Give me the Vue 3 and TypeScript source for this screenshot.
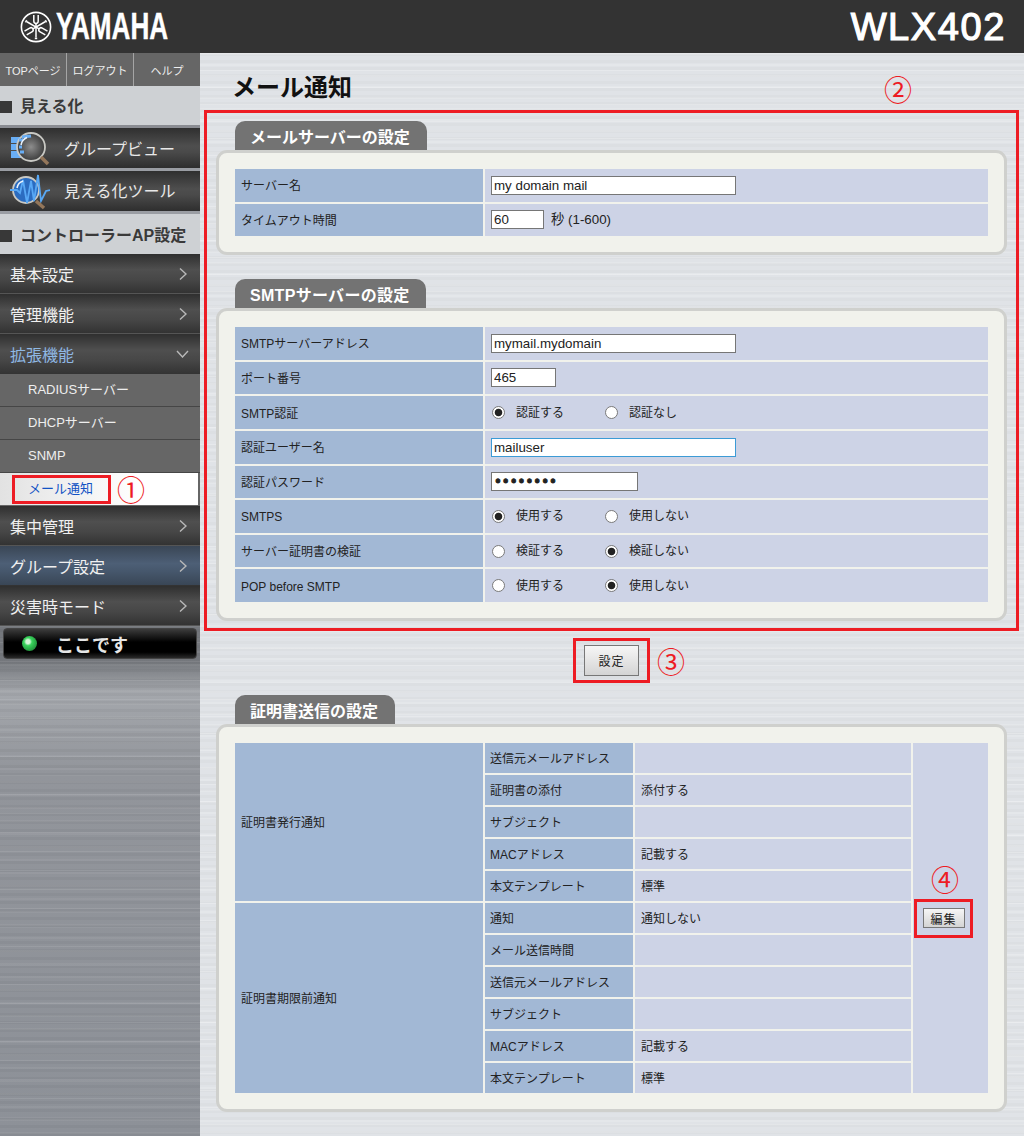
<template>
  <div class="page">
    <header class="topbar">
      <div class="brand">
        <svg class="emblem" width="32" height="32" viewBox="-16 -16 32 32">
          <circle r="14.6" fill="none" stroke="#fff" stroke-width="1.6" />
          <g v-for="a in [0, 120, 240]" :key="a" :transform="`rotate(${a})`" stroke="#fff" fill="none">
            <path d="M-2.2 -12 V-6 Q-2.2 -3.6 0 -3.6 Q2.2 -3.6 2.2 -6 V-12" stroke-width="1.5" />
            <path d="M0 -3.6 V10.5" stroke-width="1.5" />
            <path d="M-1.2 11.4 H1.2" stroke-width="1.6" />
          </g>
        </svg>
        <span class="brand-name">YAMAHA</span>
      </div>
      <span class="model">WLX402</span>
    </header>

    <div class="body">
      <aside class="sidebar">
        <nav class="topnav">
          <a>TOPページ</a>
          <a>ログアウト</a>
          <a>ヘルプ</a>
        </nav>

        <h2 class="side-head">見える化</h2>
        <a class="tool">
          <svg width="50" height="40" viewBox="0 0 50 40">
            <defs>
              <radialGradient id="lens">
                <stop offset="0" stop-color="#8d8d8d" />
                <stop offset="1" stop-color="#3c3c3c" />
              </radialGradient>
            </defs>
            <g fill="#69aef5">
              <rect x="11" y="9" width="12" height="6" />
              <rect x="11" y="16" width="12" height="6" />
              <rect x="11" y="23" width="12" height="7" />
            </g>
            <circle cx="31" cy="19" r="14" fill="url(#lens)" stroke="#c9c9c4" stroke-width="1.8" />
            <path d="M19 12 H23 M19 19 H22 M20 24 H24 M22 9 L31 8" stroke="#69aef5" stroke-width="3" />
            <path d="M21 17 A10 10 0 0 1 27 9.500" fill="none" stroke="#e8f1fb" stroke-width="1.6" />
            <path d="M41 29 L48 36" stroke="#93765a" stroke-width="3.5" />
          </svg>
          <span>グループビュー</span>
        </a>
        <a class="tool tool-2">
          <svg width="50" height="40" viewBox="0 0 50 40">
            <circle cx="26" cy="19" r="13" fill="#2b6cc0" stroke="#c9c9c4" stroke-width="1.8" />
            <path d="M10 19 H17 L20 22 L23 9 L27 32 L31 10 L34 30 L38 4 L41 30 L44 24 L46 20 L50 19" fill="none" stroke="#58a8f5" stroke-width="1.8" />
            <path d="M17 17 A9 9 0 0 1 23 10" fill="none" stroke="#e8f1fb" stroke-width="1.6" />
            <path d="M36 30 L44 37" stroke="#93765a" stroke-width="3.5" />
          </svg>
          <span>見える化ツール</span>
        </a>

        <h2 class="side-head head-2">コントローラーAP設定</h2>
        <a v-for="item in menuTop" :key="item" class="menu">
          {{ item }}
          <svg class="chev" width="8" height="14" viewBox="0 0 8 14"><path d="M1 1.500 L7 7 L1 12.500" /></svg>
        </a>
        <a class="menu open">
          拡張機能
          <svg class="chev down" width="13" height="8" viewBox="0 0 13 8"><path d="M1 1 L6.500 7 L12 1" /></svg>
        </a>
        <a v-for="sub in subMenu" :key="sub" class="sub">{{ sub }}</a>
        <div class="sub current">
          <a class="current-link">メール通知</a>
          <span class="mark mark-1">①</span>
        </div>
        <a
          v-for="item in menuBottom"
          :key="item.label"
          class="menu"
          :class="{ blue: item.blue }"
        >
          {{ item.label }}
          <svg class="chev" width="8" height="14" viewBox="0 0 8 14"><path d="M1 1.500 L7 7 L1 12.500" /></svg>
        </a>
        <button class="here" type="button"><i class="led"></i>ここです</button>
      </aside>

      <main class="main">
        <h1 class="title">メール通知</h1>

        <form class="red-box" @submit.prevent>
          <span class="mark mark-2">②</span>

          <h3 class="tab">メールサーバーの設定</h3>
          <section class="panel">
            <div class="form-table rows-a">
              <div class="th">サーバー名</div>
              <div class="td"><input class="text w245" type="text" value="my domain mail" /></div>
              <div class="th">タイムアウト時間</div>
              <div class="td"><input class="text w53" type="text" value="60" /><span class="unit">秒 (1-600)</span></div>
            </div>
          </section>

          <h3 class="tab tab-next">SMTPサーバーの設定</h3>
          <section class="panel">
            <div class="form-table rows-b">
              <div class="th">SMTPサーバーアドレス</div>
              <div class="td"><input class="text w245" type="text" value="mymail.mydomain" /></div>
              <div class="th">ポート番号</div>
              <div class="td"><input class="text w65" type="text" value="465" /></div>
              <div class="th">SMTP認証</div>
              <div class="td"><RadioPair name="auth" a="認証する" b="認証なし" :first="true" /></div>
              <div class="th">認証ユーザー名</div>
              <div class="td"><input class="text w245 focused" type="text" value="mailuser" /></div>
              <div class="th">認証パスワード</div>
              <div class="td"><input class="text w147 pass" type="password" value="password" /></div>
              <div class="th">SMTPS</div>
              <div class="td"><RadioPair name="smtps" a="使用する" b="使用しない" :first="true" /></div>
              <div class="th">サーバー証明書の検証</div>
              <div class="td"><RadioPair name="verify" a="検証する" b="検証しない" :first="false" /></div>
              <div class="th">POP before SMTP</div>
              <div class="td"><RadioPair name="pop" a="使用する" b="使用しない" :first="false" /></div>
            </div>
          </section>
        </form>

        <div class="submit-row">
          <span class="red-wrap set-wrap"><button class="btn btn-set" type="button">設定</button></span>
          <span class="mark mark-3">③</span>
        </div>

        <h3 class="tab">証明書送信の設定</h3>
        <section class="panel">
          <div class="cert-table">
            <template v-for="group in certGroups" :key="group.title">
              <div class="th" :style="{ gridRow: `span ${group.rows.length}` }">{{ group.title }}</div>
              <template v-for="row in group.rows" :key="group.title + row[0]">
                <div class="th col2">{{ row[0] }}</div>
                <div class="td col3">{{ row[1] }}</div>
              </template>
            </template>
            <div class="td edit-cell">
              <span class="red-wrap edit-wrap">
                <span class="mark mark-4">④</span>
                <button class="btn btn-edit" type="button">編集</button>
              </span>
            </div>
          </div>
        </section>
      </main>
    </div>
  </div>
</template>

<script setup lang="ts">
import { h } from "vue";

interface CertGroup {
  title: string;
  rows: [string, string][];
}

const menuTop: string[] = ["基本設定", "管理機能"];
const subMenu: string[] = ["RADIUSサーバー", "DHCPサーバー", "SNMP"];
const menuBottom = [
  { label: "集中管理", blue: false },
  { label: "グループ設定", blue: true },
  { label: "災害時モード", blue: false },
];

const certGroups: CertGroup[] = [
  {
    title: "証明書発行通知",
    rows: [
      ["送信元メールアドレス", ""],
      ["証明書の添付", "添付する"],
      ["サブジェクト", ""],
      ["MACアドレス", "記載する"],
      ["本文テンプレート", "標準"],
    ],
  },
  {
    title: "証明書期限前通知",
    rows: [
      ["通知", "通知しない"],
      ["メール送信時間", ""],
      ["送信元メールアドレス", ""],
      ["サブジェクト", ""],
      ["MACアドレス", "記載する"],
      ["本文テンプレート", "標準"],
    ],
  },
];

// two radio buttons side by side, same markup on every row
const RadioPair = (props: { name: string; a: string; b: string; first: boolean }) =>
  h("div", { class: "radios" }, [
    h("label", { class: "radio-opt" }, [
      h("input", { type: "radio", name: props.name, checked: props.first, class: "radio" }),
      h("span", props.a),
    ]),
    h("label", { class: "radio-opt" }, [
      h("input", { type: "radio", name: props.name, checked: !props.first, class: "radio" }),
      h("span", props.b),
    ]),
  ]);
RadioPair.props = ["name", "a", "b", "first"];
</script>

<style>
body {
  margin: 0;
}
.radios {
  display: flex;
  align-items: center;
  margin-top: -2px;
}
.radio-opt {
  display: flex;
  align-items: center;
  width: 113px;
}
.radio {
  appearance: none;
  width: 13px;
  height: 13px;
  margin: 0 11px 0 1px;
  border: 1px solid #7a7a7a;
  border-radius: 50%;
  background: #fff;
  box-sizing: border-box;
}
.radio:checked {
  background: radial-gradient(circle, #222 0, #222 3.4px, #fff 4.2px);
}
</style>

<style scoped>
.page {
  width: 1024px;
  height: 1136px;
  overflow: hidden;
  font-family: "Liberation Sans", "Noto Sans CJK JP", sans-serif;
  font-size: 12px;
  color: #222;
}

.topbar {
  height: 53px;
  background: #333;
  display: flex;
  align-items: center;
  justify-content: space-between;
  padding: 0 18px 0 20px;
  color: #fff;
}

.brand {
  display: flex;
  align-items: center;
}

.emblem {
  flex: none;
}

.brand-name {
  display: inline-block;
  margin-left: 4px;
  font-size: 36px;
  font-weight: 700;
  line-height: 40px;
  transform: scaleX(0.725);
  transform-origin: left center;
  -webkit-text-stroke: 0.4px #fff;
}

.model {
  font-size: 38px;
  line-height: 44px;
  letter-spacing: 1.6px;
  -webkit-text-stroke: 1.2px #fff;
}

.body {
  display: flex;
  height: 1083px;
}

.sidebar {
  width: 200px;
  flex: none;
  display: flex;
  flex-direction: column;
  background:
    repeating-linear-gradient(180deg, rgba(255, 255, 255, 0.09) 0 1px, transparent 1px 19px),
    repeating-linear-gradient(180deg, rgba(0, 0, 0, 0.035) 0 3px, transparent 3px 8px),
    repeating-linear-gradient(180deg, rgba(255, 255, 255, 0.05) 0 2px, transparent 2px 13px),
    linear-gradient(180deg, #74777c 607px, #a4a7ac 640px, #92959b 720px, #8d9198);
}

.topnav {
  height: 33px;
  display: flex;
  background: #666;
}

.topnav a {
  flex: 1;
  display: flex;
  align-items: center;
  justify-content: center;
  color: #eee;
  font-size: 11px;
  border-left: 1px solid #a5a5a5;
}

.topnav a:first-child {
  border-left: none;
}

.side-head {
  margin: 0;
  padding: 0 0 2px 20px;
  box-sizing: content-box;
  height: 37px;
  display: flex;
  align-items: center;
  position: relative;
  background: #ced1d4;
  color: #3a3a3a;
  font-size: 16px;
  font-weight: 700;
  border-bottom: 3px solid #8a8c92;
}

.side-head::before {
  content: "";
  position: absolute;
  left: 0;
  top: 15px;
  width: 12px;
  height: 12px;
  background: #383838;
}

.head-2 {
  height: 40px;
  padding-bottom: 0;
  border-bottom: none;
}

.head-2::before {
  top: 16px;
}

.tool {
  height: 40px;
  display: flex;
  align-items: center;
  color: #e8e8e8;
  font-size: 16px;
  background: linear-gradient(180deg, #2f2f2f, #4e4e4e 45%, #4a4a4a 60%, #2e2e2e);
  border-bottom: 3px solid #9a9da3;
}

.tool svg {
  flex: none;
  margin-right: 14px;
}

.tool-2 {
  box-sizing: content-box;
  height: 38px;
  padding-bottom: 2px;
}

.tool-2 svg {
  margin-bottom: -2px;
}

.menu {
  height: 40px;
  flex: none;
  box-sizing: border-box;
  display: flex;
  align-items: center;
  justify-content: space-between;
  padding: 0 13px 0 10px;
  color: #f0f0f0;
  font-size: 16px;
  background: linear-gradient(180deg, #2f2f2f, #4f4f4f 40%, #474747 65%, #333);
  border-bottom: 1px solid #555;
}

.menu.open {
  color: #8fb8e4;
  padding-right: 11px;
  border-bottom: none;
}

.menu.blue {
  background: linear-gradient(180deg, #3a4655, #4d5f76 45%, #46576c 65%, #394656);
  border-bottom-color: #333;
}

.chev {
  fill: none;
  stroke: #b9b9b9;
  stroke-width: 1.4;
}

.sub {
  height: 33px;
  flex: none;
  box-sizing: border-box;
  display: flex;
  align-items: center;
  padding: 0 0 1px 28px;
  color: #eee;
  font-size: 13px;
  line-height: 16px;
  background: #666;
  border-bottom: 1px solid #464646;
}

.sub.current {
  padding: 0 0 0 12px;
  margin-right: 2px;
  background: linear-gradient(90deg, #e2e2e2, #fff 70%);
  border-bottom: 1px solid #666;
  box-shadow: 2px 0 0 #666;
}

.current-link {
  box-sizing: border-box;
  width: 99px;
  height: 29px;
  padding: 0 0 0 13px;
  display: flex;
  align-items: center;
  color: #1252c4;
  border: 3px solid #ed1c24;
}

.mark {
  color: #ed1c24;
  font-size: 28px;
  line-height: 30px;
  font-family: "Noto Sans CJK JP", sans-serif;
  font-weight: 400;
}

.mark-1 {
  margin-left: 6px;
}

.here {
  margin: 2px 3px 0;
  height: 31px;
  flex: none;
  display: flex;
  align-items: center;
  padding: 0 0 0 18px;
  border: 1px solid #444;
  border-radius: 4px;
  background: linear-gradient(180deg, #3c3c3c, #000 45%, #000 80%, #2a2a2a);
  color: #e6e6e6;
  font-size: 18px;
  font-weight: 700;
  font-family: "Noto Sans CJK JP", sans-serif;
}

.led {
  width: 15px;
  height: 15px;
  margin-right: 19px;
  border-radius: 50%;
  background: radial-gradient(circle at 40% 38%, #d5f5d8 0 2px, #39d35c 4px, #2cb04a 7px, #1a6c2e);
}

.main {
  flex: 1;
  padding: 0 0 0 5px;
  position: relative;
  background:
    repeating-linear-gradient(180deg, rgba(255, 255, 255, 0.22) 0 1px, transparent 1px 17px),
    repeating-linear-gradient(180deg, rgba(0, 0, 0, 0.018) 0 3px, transparent 3px 7px),
    repeating-linear-gradient(180deg, rgba(255, 255, 255, 0.14) 0 2px, transparent 2px 11px),
    #e0e3e7;
}

.title {
  height: 57px;
  margin: 0 0 0 27px;
  box-sizing: border-box;
  padding-top: 17px;
  font-size: 24px;
  line-height: 36px;
  font-weight: 700;
  color: #111;
}

.red-box {
  position: relative;
  width: 815px;
  height: 521px;
  box-sizing: border-box;
  margin: 0 0 0 -1px;
  padding: 8px 9px 7px 9px;
  border: 3px solid #ed1c24;
}

.mark-2 {
  position: absolute;
  right: 104px;
  top: -39px;
}

.tab {
  width: max-content;
  height: 29px;
  margin: 0 0 0 19px;
  padding: 0 17px 0 15px;
  display: flex;
  align-items: center;
  background: #737373;
  border-radius: 10px 10px 0 0;
  color: #fff;
  font-size: 16px;
  font-weight: 700;
}

.tab-next {
  margin-top: 24px;
  padding-right: 16px;
  letter-spacing: 0.3px;
}

.panel {
  width: 791px;
  box-sizing: border-box;
  padding: 16px;
  background: #f1f2ec;
  border: 3px solid #cfd0cd;
  border-radius: 11px;
}

.main > .tab {
  margin-left: 30px;
}

.main > .panel {
  margin-left: 11px;
}

.form-table {
  display: grid;
  grid-template-columns: 248px 503px;
  gap: 2px;
}

.rows-a {
  grid-auto-rows: 32.5px;
}

.rows-b {
  grid-auto-rows: 32.625px;
}

.th {
  display: flex;
  align-items: center;
  padding: 2px 0 0 6px;
  line-height: 16px;
  background: #a2b8d5;
}

.td {
  display: flex;
  align-items: center;
  padding: 2px 0 0 6px;
  line-height: 16px;
  background: #cdd3e6;
}

.text {
  box-sizing: border-box;
  height: 19px;
  margin-top: -2px;
  padding: 0 2px;
  border: 1px solid #767676;
  background: #fff;
  font-family: "Liberation Sans", sans-serif;
  font-size: 13.333px;
  color: #222;
  outline: none;
}

.w245 {
  width: 245px;
}

.w147 {
  width: 147px;
}

.w65 {
  width: 65px;
}

.w53 {
  width: 53px;
}

.focused {
  border-color: #3c9bd6;
}

.pass {
  font-family: "DejaVu Sans", sans-serif;
  -webkit-text-stroke: 1px #222;
}

.unit {
  margin-left: 7px;
  margin-top: -1px;
  font-size: 13.333px;
}

.submit-row {
  height: 45px;
  margin-top: 7px;
  margin-bottom: 12px;
  margin-left: 368px;
  display: flex;
  align-items: center;
}

.red-wrap {
  box-sizing: border-box;
  display: flex;
  align-items: center;
  justify-content: center;
  border: 3px solid #ed1c24;
  position: relative;
}

.set-wrap {
  width: 77px;
  height: 45px;
}

.mark-3 {
  margin-left: 7px;
}

.btn {
  box-sizing: border-box;
  padding: 0;
  border: 1px solid #777;
  background: linear-gradient(180deg, #f6f6f6, #d4d4d4);
  color: #222;
  font-size: 12px;
  letter-spacing: 1px;
  font-family: "Noto Sans CJK JP", sans-serif;
}

.btn-set {
  width: 55px;
  height: 31px;
}

.btn-edit {
  width: 42px;
  height: 20px;
}

.cert-table {
  display: grid;
  grid-template-columns: 248px 148px 276px 75px;
  grid-auto-rows: 30px;
  gap: 2px;
}

.col2 {
  padding-left: 5px;
}

.edit-cell {
  grid-column: 4;
  grid-row: 1 / span 11;
  padding: 0 0 0 1px;
}

.edit-wrap {
  width: 59px;
  height: 39px;
}

.mark-4 {
  position: absolute;
  left: 14px;
  top: -38px;
}
</style>
